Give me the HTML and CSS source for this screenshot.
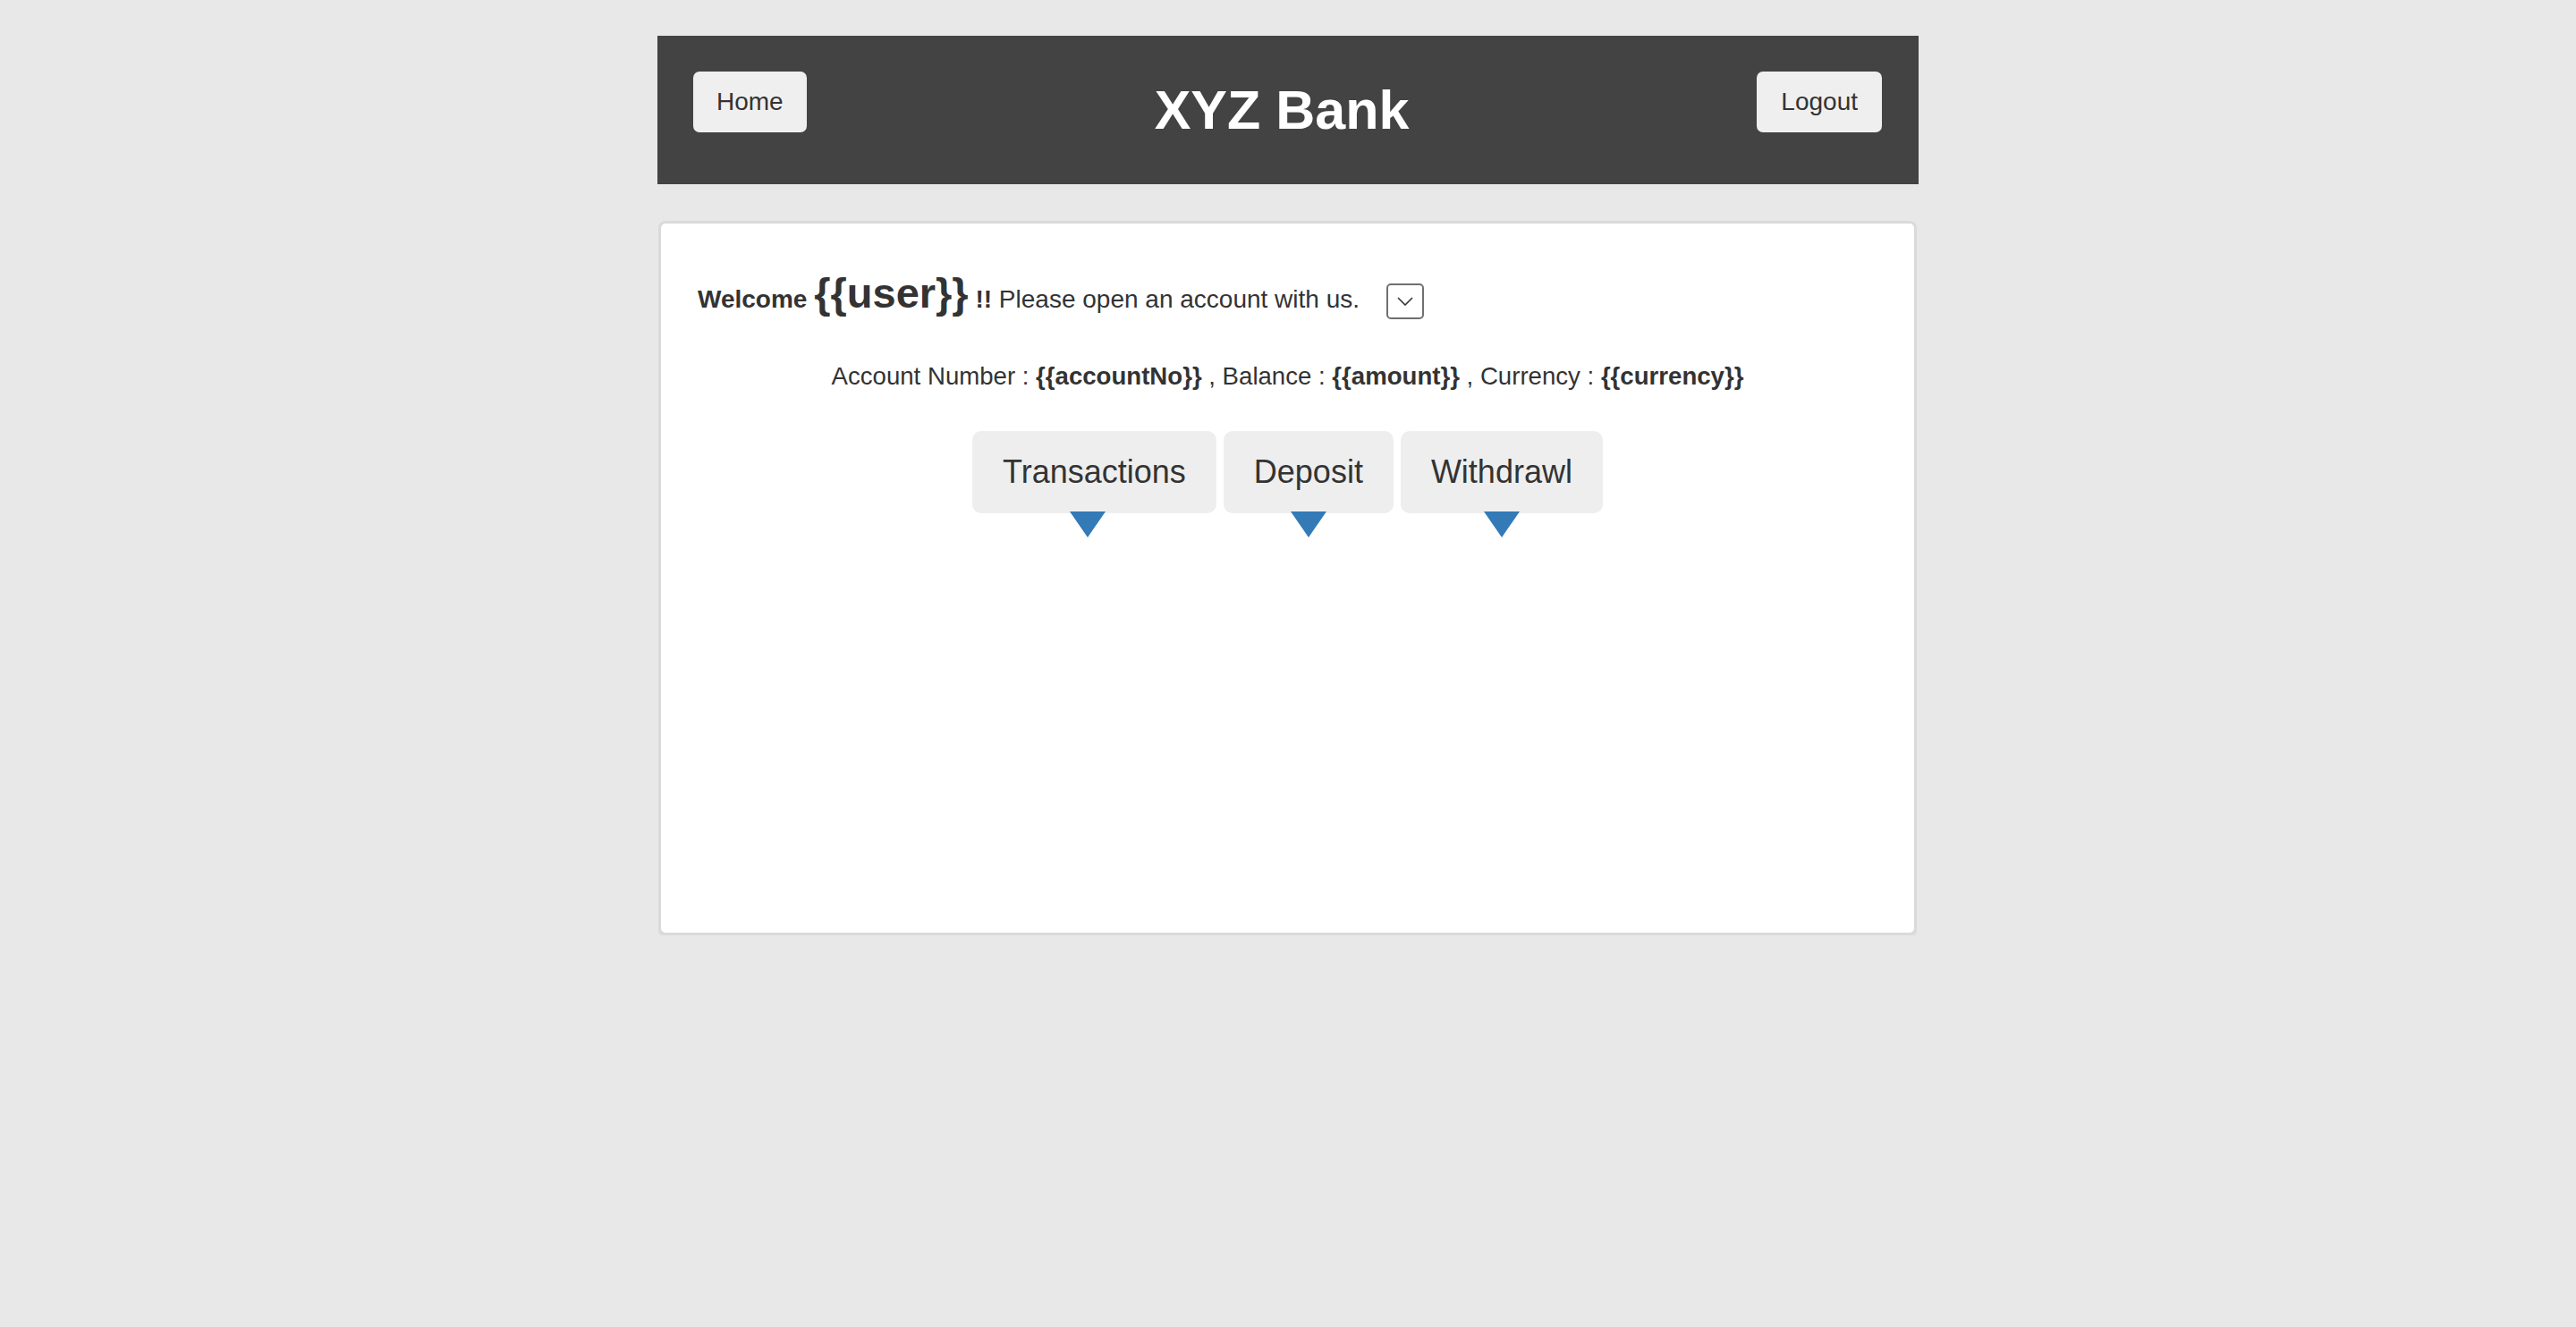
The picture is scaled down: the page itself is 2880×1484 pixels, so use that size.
FILE: index.html
```html
<!DOCTYPE html>
<html lang="en">
<head>
<meta charset="utf-8">
<title>XYZ Bank</title>
<link rel="stylesheet" href="styles.css">
</head>
<body>
<div class="page">
  <header class="topbar">
    <button class="btn btn-home">Home</button>
    <h1 class="title">XYZ Bank</h1>
    <button class="btn btn-logout">Logout</button>
  </header>
  <main class="card">
    <div class="welcome">
      <b>Welcome</b> <span class="user">{{user}}</span> <b>!!</b> Please open an account with us.<span class="select"><svg width="18" height="10" viewBox="0 0 18 10"><path d="M1 1 L9 9 L17 1" fill="none" stroke="#333" stroke-width="1.6"/></svg></span>
    </div>
    <div class="account">
      Account Number : <b>{{accountNo}}</b> , Balance : <b>{{amount}}</b> , Currency : <b>{{currency}}</b>
    </div>
    <div class="tabs">
      <button class="tab tab-first">Transactions</button>
      <button class="tab">Deposit</button>
      <button class="tab">Withdrawl</button>
    </div>
  </main>
</div>
</body>
</html>
```

FILE: styles.css
```css
html, body {
  margin: 0;
  padding: 0;
}
body {
  background: #e8e8e8;
  font-family: "Liberation Sans", Arial, sans-serif;
  color: #333;
}
.page {
  width: 1410px;
  margin: 40px auto 0;
}
.topbar {
  height: 166px;
  box-sizing: border-box;
  background: #434343;
  padding: 40px 41px 0 40px;
  display: flex;
  justify-content: space-between;
  align-items: flex-start;
}
.btn {
  font-family: "Liberation Sans", Arial, sans-serif;
  font-size: 28px;
  color: #333;
  background: #efefef;
  border: none;
  border-radius: 7px;
  height: 68px;
  padding: 0 26px;
  margin: 0;
}
.btn-logout {
  padding: 0 27px;
}
.title {
  margin: 0;
  align-self: center;
  margin-top: -40px;
  color: #fff;
  font-size: 61px;
  font-weight: bold;
  line-height: 1;
}
.card {
  display: block;
  margin: 41px 2px 0 1px;
  background: #fff;
  border: 3px solid #dadada;
  border-radius: 8px;
  box-shadow: 0 3px 0 #dedede;
  min-height: 799px;
  box-sizing: border-box;
  padding: 48px 41px 0 41px;
}
.welcome {
  font-size: 28px;
  line-height: 60px;
  white-space: nowrap;
}
.user {
  font-size: 47px;
  font-weight: bold;
}
.select {
  display: inline-flex;
  align-items: center;
  justify-content: center;
  width: 42px;
  height: 40px;
  box-sizing: border-box;
  border: 2px solid #707070;
  border-radius: 5px;
  margin-left: 30px;
  vertical-align: middle;
  background: #fff;
}
.select svg {
  display: block;
}
.account {
  text-align: center;
  font-size: 27.6px;
  line-height: 40px;
  margin-top: 36px;
}
.tabs {
  display: flex;
  justify-content: center;
  gap: 8px;
  margin-top: 41px;
}
.tab {
  position: relative;
  font-family: "Liberation Sans", Arial, sans-serif;
  font-size: 36px;
  color: #333;
  background: #eeeeee;
  border: none;
  border-radius: 10px;
  height: 92px;
  padding: 0 34px;
  margin: 0;
}
.tab::after {
  content: "";
  position: absolute;
  left: 50%;
  top: 90px;
  margin-left: -20px;
  width: 0;
  height: 0;
  border-left: 20px solid transparent;
  border-right: 20px solid transparent;
  border-top: 29px solid #337ab7;
}
.tab-first::after {
  margin-left: -27px;
}
```
